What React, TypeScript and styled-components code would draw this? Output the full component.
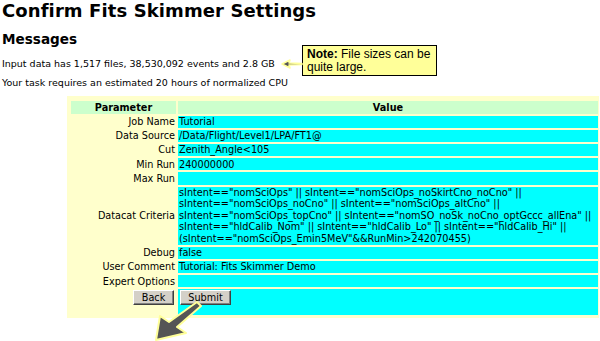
import styled, { createGlobalStyle } from "styled-components";

const GlobalStyle = createGlobalStyle`
  html, body {
    margin: 0;
    padding: 0;
    background: #ffffff;
  }
`;

const Page = styled.div`
  position: relative;
  width: 600px;
  height: 341px;
  overflow: hidden;
  padding: 0 2px;
  box-sizing: border-box;
  font-family: "DejaVu Sans", Verdana, sans-serif;
  color: #000;
`;

const Title = styled.h1`
  margin: 0;
  font-size: 18px;
  line-height: 21px;
  letter-spacing: 0.1px;
  font-weight: bold;
`;

const Section = styled.h2`
  margin: 10px 0 0;
  font-size: 13.6px;
  line-height: 16px;
  font-weight: bold;
`;

const Message = styled.p<{ $gap: number }>`
  margin: ${(p) => p.$gap}px 0 0;
  font-size: 9.5px;
  line-height: 12px;
`;

const Panel = styled.div`
  margin: 7px 0 0 65px;
  width: 532px;
  box-sizing: border-box;
  padding: 5px 2px 3px 4px;
  background: #ffffcc;
`;

const Grid = styled.div`
  display: grid;
  grid-template-columns: 105px 420px;
  gap: 2px;
  font-size: 9.7px;
  line-height: 11.5px;
`;

const HeadCell = styled.div`
  background: #ccffcc;
  font-weight: bold;
  text-align: center;
  padding: 0.6px 0;
`;

const Label = styled.div`
  text-align: right;
  padding: 0.35px 1px 0.35px 0;
  display: flex;
  align-items: center;
  justify-content: flex-end;
  white-space: nowrap;
`;

const Value = styled.div`
  background: #00ffff;
  padding: 0.35px 0 0.35px 1px;
  min-height: 11.5px;
  white-space: nowrap;
`;

const ButtonLabel = styled.div`
  display: flex;
  justify-content: flex-end;
  align-items: flex-start;
  padding: 1px 2px 0 0;
`;

const ButtonCell = styled.div`
  background: #00ffff;
  height: 26px;
  padding: 1px 0 0 2px;
  box-sizing: border-box;
`;

const Button = styled.button<{ $w: number }>`
  width: ${(p) => p.$w}px;
  height: 15px;
  padding: 0;
  margin: 0;
  font-family: "DejaVu Sans", Verdana, sans-serif;
  font-size: 9.7px;
  line-height: 11px;
  color: #000;
  background: #d4d0c8;
  border: 1px solid;
  border-color: #ffffff #404040 #404040 #ffffff;
  box-shadow: inset -1px -1px 0 #808080;
`;

const Note = styled.div`
  position: absolute;
  left: 302px;
  top: 45px;
  width: 135px;
  height: 31px;
  box-sizing: border-box;
  border: 1px solid #000;
  background: #ffff99;
  padding: 2px 0 0 4px;
  font-family: "Liberation Sans", Arial, sans-serif;
  font-size: 12px;
  line-height: 13px;
`;

const Callout = styled.svg`
  position: absolute;
  overflow: visible;
`;

const rows: [string, string][] = [
  ["Job Name", "Tutorial"],
  ["Data Source", "/Data/Flight/Level1/LPA/FT1@"],
  ["Cut", "Zenith_Angle<105"],
  ["Min Run", "240000000"],
  ["Max Run", ""],
];

const criteria = [
  'sIntent=="nomSciOps" || sIntent=="nomSciOps_noSkirtCno_noCno" ||',
  'sIntent=="nomSciOps_noCno" || sIntent=="nomSciOps_altCno" ||',
  'sIntent=="nomSciOps_topCno" || sIntent=="nomSO_noSk_noCno_optGccc_allEna" ||',
  'sIntent=="hldCalib_Nom" || sIntent=="hldCalib_Lo" || sIntent=="hldCalib_Hi" ||',
  '(sIntent=="nomSciOps_Emin5MeV"&&RunMin>242070455)',
];

const tailRows: [string, string][] = [
  ["Debug", "false"],
  ["User Comment", "Tutorial: Fits Skimmer Demo"],
  ["Expert Options", ""],
];

export default function App() {
  return (
    <Page>
      <GlobalStyle />
      <Title>Confirm Fits Skimmer Settings</Title>
      <Section>Messages</Section>
      <Message $gap={11}>
        Input data has 1,517 files, 38,530,092 events and 2.8 GB
      </Message>
      <Message $gap={7}>Your task requires an estimated 20 hours of normalized CPU</Message>
      <Panel>
        <Grid>
          <HeadCell>Parameter</HeadCell>
          <HeadCell>Value</HeadCell>
          {rows.map(([k, v]) => (
            <>
              <Label key={k + "l"}>{k}</Label>
              <Value key={k + "v"}>{v}</Value>
            </>
          ))}
          <Label>Datacat Criteria</Label>
          <Value>
            {criteria.map((line) => (
              <div key={line}>{line}</div>
            ))}
          </Value>
          {tailRows.map(([k, v]) => (
            <>
              <Label key={k + "l"}>{k}</Label>
              <Value key={k + "v"}>{v}</Value>
            </>
          ))}
          <ButtonLabel>
            <Button $w={41}>Back</Button>
          </ButtonLabel>
          <ButtonCell>
            <Button $w={51}>Submit</Button>
          </ButtonCell>
        </Grid>
      </Panel>

      <Note>
        <b>Note:</b> File sizes can be
        <br />
        quite large.
      </Note>

      <Callout style={{ left: 280, top: 57 }} width="24" height="14" viewBox="0 0 24 14">
        <polygon
          points="2,7 10,3 9,6 22,6.5 22,7.5 9,8 10,11"
          fill="#555"
          stroke="#ffff99"
          strokeWidth="1.5"
          strokeLinejoin="round"
        />
      </Callout>

      <Callout style={{ left: 140, top: 296 }} width="80" height="45" viewBox="0 0 80 45">
        <polygon
          points="57,6 61,10 37,31 46,37 16,44 20,20 29,26"
          fill="#555"
          stroke="#ffff99"
          strokeWidth="2"
          strokeLinejoin="round"
        />
      </Callout>
    </Page>
  );
}
